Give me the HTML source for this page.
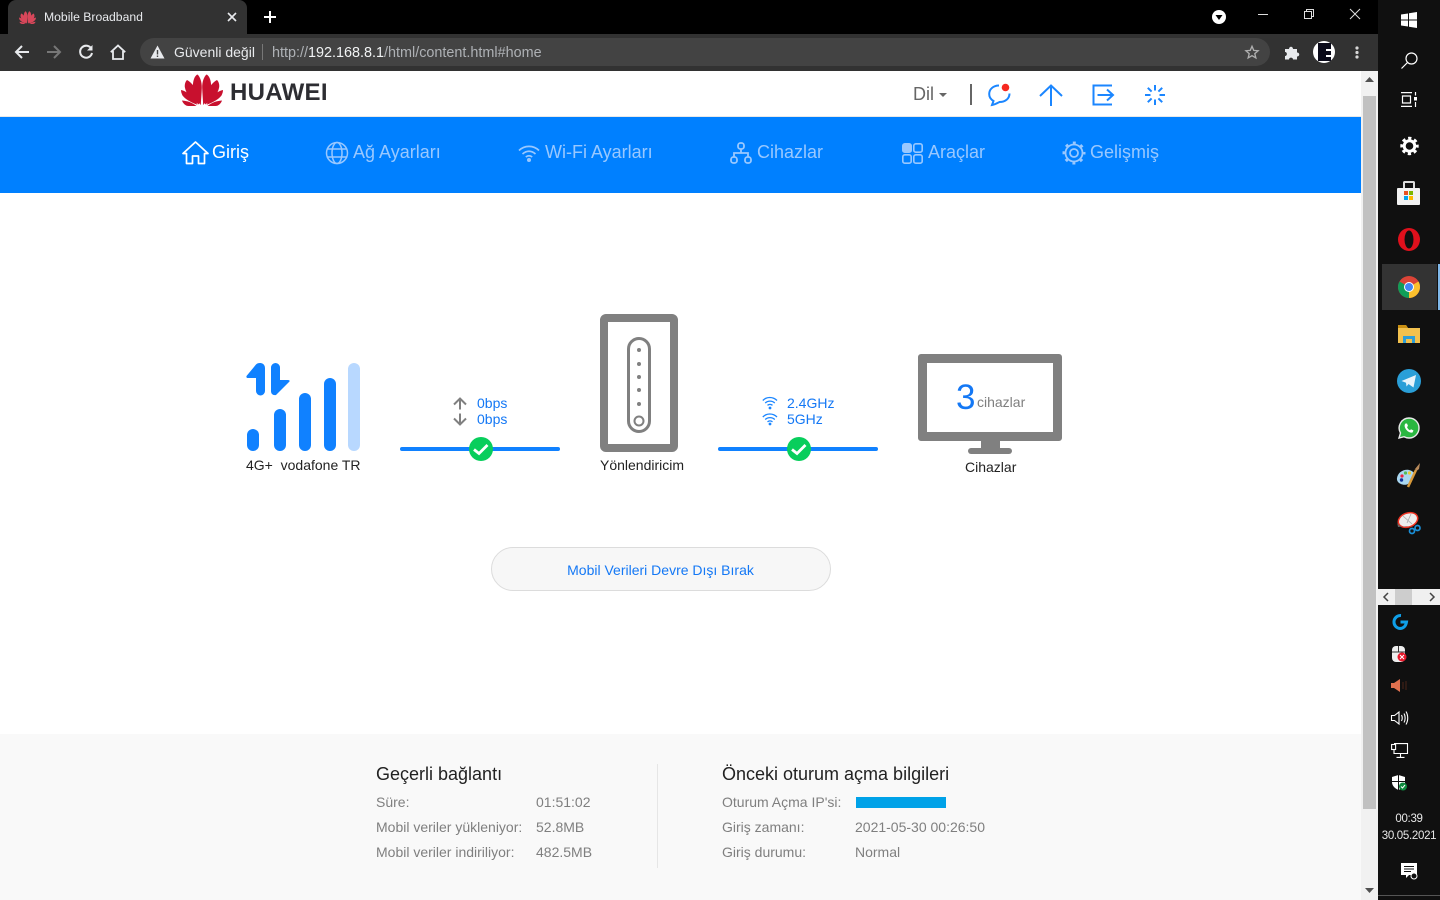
<!DOCTYPE html>
<html><head><meta charset="utf-8"><title>Mobile Broadband</title>
<style>
html,body{margin:0;padding:0;width:1440px;height:900px;overflow:hidden;background:#fff;font-family:"Liberation Sans",sans-serif}
.a{position:absolute;white-space:nowrap}
svg{position:absolute;overflow:visible}
.n{font-size:18px;line-height:22px;top:141px;color:#99c8ff}
.g{font-size:14px;line-height:18px;color:#7f7f7f}
.b{font-size:14px;line-height:16px;color:#1478f5}
.k{font-size:14px;line-height:18px;color:#222}
</style></head><body>
<!-- chrome -->
<div class="a" style="left:0;top:0;width:1378px;height:34px;background:#000"></div>
<div class="a" style="left:8px;top:0;width:239px;height:34px;background:#323232;border-radius:8px 8px 0 0"></div>
<div class="a" style="left:0;top:34px;width:1378px;height:37px;background:#323232"></div>
<svg style="left:19px;top:11px" width="17" height="13" viewBox="0 0 42 32"><g fill="#d8475a">
<path d="M19.800 31C12 23 10.500 12 13 5C14 2 16 .5 16.500 .5C19 2.500 21 8 20.800 14C20.600 20 20 26 19.800 31Z"/>
<path d="M22.200 31C30 23 31.500 12 29 5C28 2 26 .5 25.500 .5C23 2.500 21 8 21.200 14C21.400 20 22 26 22.200 31Z"/>
<path d="M18 30.500C10 26 5 20 3.800 13C3.500 10 4.500 7.500 6 6C10 8 14 13 16 18C17.500 22.500 18 27 18 30.500Z"/>
<path d="M24 30.500C32 26 37 20 38.200 13C38.500 10 37.500 7.500 36 6C32 8 28 13 26 18C24.500 22.500 24 27 24 30.500Z"/>
<path d="M16.500 30.800C10 28.500 4 25 1.500 21.500C.5 19.500 0 17.500 0 16C5 17 11 21 16.500 30.800Z"/>
<path d="M25.500 30.800C32 28.500 38 25 40.500 21.500C41.500 19.500 42 17.500 42 16C37 17 31 21 25.500 30.800Z"/>
<path d="M15.500 32H7.500C4.500 32 2 29.500 1 26.500C7 27 11 28.500 15.500 32Z"/>
<path d="M26.500 32H34.500C37.500 32 40 29.500 41 26.500C35 27 31 28.500 26.500 32Z"/></g></svg>
<div class="a" style="left:44px;top:9px;font-size:12.2px;line-height:16px;color:#e8eaed">Mobile Broadband</div>
<svg style="left:228px;top:13px" width="8" height="8"><path d="M0 0L8 8M8 0L0 8" stroke="#e8eaed" stroke-width="1.600"/></svg>
<svg style="left:264px;top:11px" width="12" height="12"><path d="M6 0V12M0 6H12" stroke="#fff" stroke-width="2"/></svg>
<!-- toolbar icons -->
<svg style="left:14px;top:44px" width="16" height="16" fill="none"><path d="M15 8H2M8 2L2 8L8 14" stroke="#e8eaed" stroke-width="2"/></svg>
<svg style="left:46px;top:44px" width="16" height="16" fill="none"><path d="M1 8H14M8 2L14 8L8 14" stroke="#777" stroke-width="2"/></svg>
<svg style="left:78px;top:44px" width="16" height="16" fill="none"><path d="M13.500 5A6 6 0 1 0 14 9" stroke="#e8eaed" stroke-width="2"/><path d="M14.500 1V6.500H9" fill="#e8eaed"/></svg>
<svg style="left:110px;top:44px" width="16" height="16" fill="none"><path d="M.8 8.200L8 1.500L15.200 8.200M3 7V15H13V7" stroke="#e8eaed" stroke-width="1.800"/></svg>
<div class="a" style="left:140px;top:38px;width:1130px;height:28px;border-radius:14px;background:#434343"></div>
<svg style="left:150px;top:45px" width="15" height="14"><path d="M7.500 .5L14.500 13.500H.5Z" fill="#e8eaed"/><path d="M7.500 5V9.500M7.500 10.500V12" stroke="#434343" stroke-width="1.400"/></svg>
<div class="a" style="left:174px;top:44px;font-size:14px;line-height:16px;color:#e8eaed">Güvenli değil</div>
<div class="a" style="left:262px;top:44px;width:1px;height:16px;background:#777"></div>
<div class="a" style="left:272px;top:45px;font-size:14.4px;line-height:16px;color:#aeb1b5">http://<span style="color:#f1f3f4">192.168.8.1</span>/html/content.html#home</div>
<svg style="left:1245px;top:45px" width="14" height="14" viewBox="0 0 16 16" fill="none"><path d="M8 1.500L10 6.200L15 6.600L11.200 9.900L12.400 14.800L8 12.200L3.600 14.800L4.800 9.900L1 6.600L6 6.200Z" stroke="#b0b0b0" stroke-width="1.500"/></svg>
<svg style="left:1284px;top:45px" width="15" height="15"><path d="M1 4H5C5 1 9 1 9 4H13V7.500C16 7.500 16 11.500 13 11.500V14.500H9C9 12 5 12 5 14.500H1V11C3.500 11 3.500 7 1 7Z" fill="#e8eaed"/></svg>
<div class="a" style="left:1313px;top:41px;width:22px;height:22px;border-radius:50%;background:#fff"></div>
<div class="a" style="left:1318px;top:43px;width:13px;height:18px;background:#0b0b1a"></div>
<div class="a" style="left:1326px;top:49px;width:5px;height:2px;background:#fff;box-shadow:0 6px 0 #fff"></div>
<svg style="left:1355px;top:46px" width="4" height="14"><circle cx="2" cy="2" r="1.600" fill="#d8d8d8"/><circle cx="2" cy="6.500" r="1.600" fill="#d8d8d8"/><circle cx="2" cy="11" r="1.600" fill="#d8d8d8"/></svg>
<!-- window controls -->
<svg style="left:1212px;top:10px" width="14" height="14"><circle cx="7" cy="7" r="7" fill="#fff"/><path d="M3.500 5H10.500L7 10Z" fill="#000"/></svg>
<div class="a" style="left:1258px;top:14px;width:10px;height:1px;background:#ddd"></div>
<svg style="left:1304px;top:9px" width="10" height="10" fill="none" stroke="#ddd"><rect x=".5" y="2.500" width="7" height="7"/><path d="M2.500 2.500V.5H9.500V7.500H7.500"/></svg>
<svg style="left:1350px;top:9px" width="10" height="10"><path d="M0 0L10 10M10 0L0 10" stroke="#ddd" stroke-width="1"/></svg>

<!-- header -->
<svg style="left:181px;top:74px" width="42" height="32" viewBox="0 0 42 32"><g fill="#c8102e">
<path d="M19.800 31C12 23 10.500 12 13 5C14 2 16 .5 16.500 .5C19 2.500 21 8 20.800 14C20.600 20 20 26 19.800 31Z"/>
<path d="M22.200 31C30 23 31.500 12 29 5C28 2 26 .5 25.500 .5C23 2.500 21 8 21.200 14C21.400 20 22 26 22.200 31Z"/>
<path d="M18 30.500C10 26 5 20 3.800 13C3.500 10 4.500 7.500 6 6C10 8 14 13 16 18C17.500 22.500 18 27 18 30.500Z"/>
<path d="M24 30.500C32 26 37 20 38.200 13C38.500 10 37.500 7.500 36 6C32 8 28 13 26 18C24.500 22.500 24 27 24 30.500Z"/>
<path d="M16.500 30.800C10 28.500 4 25 1.500 21.500C.5 19.500 0 17.500 0 16C5 17 11 21 16.500 30.800Z"/>
<path d="M25.500 30.800C32 28.500 38 25 40.500 21.500C41.500 19.500 42 17.500 42 16C37 17 31 21 25.500 30.800Z"/>
<path d="M15.500 32H7.500C4.500 32 2 29.500 1 26.500C7 27 11 28.500 15.500 32Z"/>
<path d="M26.500 32H34.500C37.500 32 40 29.500 41 26.500C35 27 31 28.500 26.500 32Z"/></g></svg>
<div class="a" style="left:230px;top:79px;font-size:24px;line-height:28px;font-weight:700;color:#2d2d32;letter-spacing:.3px">HUAWEI</div>
<div class="a" style="left:913px;top:84px;font-size:18px;line-height:20px;color:#666">Dil</div>
<svg style="left:939px;top:93px" width="8" height="4"><path d="M0 0H8L4 4Z" fill="#666"/></svg>
<div class="a" style="left:970px;top:84px;width:2px;height:21px;background:#666"></div>
<svg style="left:988px;top:83px" width="24" height="24" fill="none" stroke="#1b86ff" stroke-width="2"><path d="M11 2.500C5 2.500 1.200 6.500 1.200 11C1.200 14 3 16.500 5.500 18L4 22C7 21.500 9.500 20 11.500 19C17.500 19 21.500 15.500 21.500 10.500"/><circle cx="17.500" cy="4.500" r="3.800" fill="#f6281f" stroke="none"/></svg>
<svg style="left:1039px;top:84px" width="24" height="22" fill="none" stroke="#1b86ff" stroke-width="2"><path d="M12 22V1.500M1 12L12 1.500L23 12"/></svg>
<svg style="left:1092px;top:84px" width="23" height="22" fill="none" stroke="#1b86ff" stroke-width="2"><path d="M20 1.500H1.500V20.500H20M5.500 11H21M15 5.500L21 11L15 16.500"/></svg>
<svg style="left:1144px;top:84px" width="22" height="22" stroke="#1b86ff" stroke-width="2"><path d="M11 1V6.500M11 15.500V21M1 11H6.500M15.500 11H21M3.800 3.800L7.600 7.600M18.200 3.800L14.400 7.600M3.800 18.200L7.600 14.400M18.200 18.200L14.400 14.400"/></svg>

<!-- nav -->
<div class="a" style="left:0;top:116px;width:1361px;height:1px;background:#e8e8e8"></div>
<div class="a" style="left:0;top:117px;width:1361px;height:76px;background:#0080ff"></div>
<svg style="left:182px;top:141px" width="27" height="24" fill="none" stroke="#fff" stroke-width="1.700" stroke-linejoin="round"><path d="M1 12.500L13.500 1L26 12.500H22.500V22.500H16.500V15H10.500V22.500H4.500V12.500Z"/></svg>
<div class="a n" style="left:212px;color:#fff">Giriş</div>
<svg style="left:325px;top:141px" width="24" height="24" fill="none" stroke="#99c8ff" stroke-width="1.500"><circle cx="12" cy="12" r="10.500"/><ellipse cx="12" cy="12" rx="5" ry="10.500"/><path d="M2.500 8H21.500M2.500 16H21.500"/></svg>
<div class="a n" style="left:353px">Ağ Ayarları</div>
<svg style="left:518px;top:144px" width="22" height="18" fill="none" stroke="#99c8ff" stroke-width="1.700"><path d="M1 6.500C6.500 1 15.500 1 21 6.500M4.500 10C8.500 6.300 13.500 6.300 17.500 10M7.800 13C10 11.200 12 11.200 14.200 13"/><circle cx="11" cy="16" r="2" fill="#99c8ff" stroke="none"/></svg>
<div class="a n" style="left:545px">Wi-Fi Ayarları</div>
<svg style="left:730px;top:142px" width="22" height="22" fill="none" stroke="#99c8ff" stroke-width="1.800"><rect x="8" y="1" width="6" height="6" rx="2.500"/><rect x="1" y="15" width="6" height="6" rx="2.500"/><rect x="15" y="15" width="6" height="6" rx="2.500"/><path d="M11 7V11M4 15V11H18V15"/></svg>
<div class="a n" style="left:757px">Cihazlar</div>
<svg style="left:902px;top:143px" width="21" height="21" fill="none" stroke="#99c8ff" stroke-width="1.600"><rect x=".8" y=".8" width="8.400" height="8.400" rx="2" fill="#99c8ff"/><rect x="11.800" y=".8" width="8.400" height="8.400" rx="2"/><rect x=".8" y="11.800" width="8.400" height="8.400" rx="2"/><rect x="11.800" y="11.800" width="8.400" height="8.400" rx="2"/></svg>
<div class="a n" style="left:928px">Araçlar</div>
<svg style="left:1062px;top:141px" width="24" height="24" fill="none" stroke="#99c8ff"><circle cx="12" cy="12" r="8.500" stroke-width="1.800"/><circle cx="12" cy="12" r="4" stroke-width="1.800"/><circle cx="12" cy="12" r="10.300" stroke-width="2.400" stroke-dasharray="3 5.090" stroke-dashoffset="1.500"/></svg>
<div class="a n" style="left:1090px">Gelişmiş</div>

<!-- signal -->
<svg style="left:246px;top:363px" width="44" height="33" fill="#1081ff"><path d="M14 0C12 0 11 .5 10 1.500L.5 13Q0 15 2 15H10V28A4.500 4.500 0 0 0 19 28V5A4.500 5 0 0 0 14 0Z"/><path d="M29.500 0A4.500 4.500 0 0 0 25 4.500V28C25 31 27 32.500 30 32L43.500 18.500Q44 17 42 17H34V4.500A4.500 4.500 0 0 0 29.500 0Z"/></svg>
<div class="a" style="left:247px;top:429px;width:12px;height:22px;border-radius:6px;background:#1081ff"></div>
<div class="a" style="left:274px;top:409px;width:12px;height:42px;border-radius:6px;background:#1081ff"></div>
<div class="a" style="left:299px;top:393px;width:12px;height:58px;border-radius:6px;background:#1081ff"></div>
<div class="a" style="left:324px;top:378px;width:12px;height:73px;border-radius:6px;background:#1081ff"></div>
<div class="a" style="left:348px;top:363px;width:12px;height:88px;border-radius:6px;background:#b8d8ff"></div>
<div class="a k" style="left:246px;top:456px">4G+&nbsp; vodafone TR</div>

<!-- link 1 -->
<svg style="left:453px;top:397px" width="14" height="29" fill="none" stroke="#808080" stroke-width="2"><path d="M7 12.500V1.500M1 7.500L7 1.500L13 7.500M7 16.500V27.500M1 21.500L7 27.500L13 21.500"/></svg>
<div class="a b" style="left:477px;top:395px">0bps</div>
<div class="a b" style="left:477px;top:411px">0bps</div>
<div class="a" style="left:400px;top:447px;width:160px;height:4px;border-radius:2px;background:#1081ff"></div>
<svg style="left:469px;top:437px" width="24" height="24"><circle cx="12" cy="12" r="12" fill="#08ce5c"/><path d="M5 12.500L10 16.500L18.500 8" fill="none" stroke="#fff" stroke-width="2.800"/></svg>

<!-- router -->
<div class="a" style="left:600px;top:314px;width:62px;height:122px;border:8px solid #808080;border-radius:6px;background:#fff"></div>
<div class="a" style="left:627px;top:337px;width:18px;height:90px;border:3px solid #808080;border-radius:12px"></div>
<svg style="left:630px;top:340px" width="18" height="92"><g fill="#808080"><circle cx="9" cy="10" r="2"/><circle cx="9" cy="24" r="2"/><circle cx="9" cy="37" r="2"/><circle cx="9" cy="50" r="2"/><circle cx="9" cy="64" r="2"/></g><circle cx="9" cy="81" r="4.500" fill="none" stroke="#808080" stroke-width="2"/></svg>
<div class="a k" style="left:600px;top:456px">Yönlendiricim</div>

<!-- link 2 -->
<svg style="left:762px;top:396px" width="16" height="30" fill="none" stroke="#1b86ff" stroke-width="1.300"><path d="M.8 4.500C4.500 .5 11 .5 15 4.500M3.200 7C6 4.500 10 4.500 12.800 7M5.500 9.300C7 8.200 9 8.200 10.500 9.300"/><circle cx="8" cy="12" r="1.400" fill="#1b86ff" stroke="none"/><path d="M.8 21C4.500 17 11 17 15 21M3.200 23.500C6 21 10 21 12.800 23.500M5.500 25.800C7 24.700 9 24.700 10.500 25.800"/><circle cx="8" cy="28" r="1.400" fill="#1b86ff" stroke="none"/></svg>
<div class="a b" style="left:787px;top:395px">2.4GHz</div>
<div class="a b" style="left:787px;top:411px">5GHz</div>
<div class="a" style="left:718px;top:447px;width:160px;height:4px;border-radius:2px;background:#1081ff"></div>
<svg style="left:787px;top:437px" width="24" height="24"><circle cx="12" cy="12" r="12" fill="#08ce5c"/><path d="M5 12.500L10 16.500L18.500 8" fill="none" stroke="#fff" stroke-width="2.800"/></svg>

<!-- monitor -->
<div class="a" style="left:918px;top:354px;width:126px;height:69px;border:9px solid #808080;border-radius:3px;background:#fff"></div>
<div class="a" style="left:981px;top:441px;width:19px;height:9px;background:#808080"></div>
<div class="a" style="left:968px;top:448px;width:44px;height:6px;border-radius:3px;background:#808080"></div>
<div class="a" style="left:956px;top:380px;font-size:35px;line-height:36px;color:#1478f5">3</div>
<div class="a g" style="left:977px;top:393px">cihazlar</div>
<div class="a k" style="left:965px;top:458px">Cihazlar</div>

<!-- button -->
<div class="a" style="left:491px;top:547px;width:338px;height:42px;border:1px solid #dcdcdc;border-radius:22px;background:#f7f7f7"></div>
<div class="a" style="left:490.500px;top:561px;width:340px;text-align:center;font-size:14px;line-height:18px;color:#1478f5">Mobil Verileri Devre Dışı Bırak</div>

<!-- footer -->
<div class="a" style="left:0;top:734px;width:1361px;height:166px;background:#f9f9f9"></div>
<div class="a" style="left:657px;top:764px;width:1px;height:104px;background:#e6e6e6"></div>
<div class="a" style="left:376px;top:763px;font-size:18px;line-height:22px;color:#222">Geçerli bağlantı</div>
<div class="a g" style="left:376px;top:793px">Süre:</div><div class="a g" style="left:536px;top:793px">01:51:02</div>
<div class="a g" style="left:376px;top:818px">Mobil veriler yükleniyor:</div><div class="a g" style="left:536px;top:818px">52.8MB</div>
<div class="a g" style="left:376px;top:843px">Mobil veriler indiriliyor:</div><div class="a g" style="left:536px;top:843px">482.5MB</div>
<div class="a" style="left:722px;top:763px;font-size:18px;line-height:22px;color:#222">Önceki oturum açma bilgileri</div>
<div class="a g" style="left:722px;top:793px">Oturum Açma IP'si:</div><div class="a" style="left:856px;top:797px;width:90px;height:11px;background:#00a2e8"></div>
<div class="a g" style="left:722px;top:818px">Giriş zamanı:</div><div class="a g" style="left:855px;top:818px">2021-05-30 00:26:50</div>
<div class="a g" style="left:722px;top:843px">Giriş durumu:</div><div class="a g" style="left:855px;top:843px">Normal</div>

<!-- page scrollbar -->
<div class="a" style="left:1361px;top:71px;width:17px;height:829px;background:#f1f1f1"></div>
<div class="a" style="left:1363px;top:96px;width:13px;height:713px;background:#c1c1c1"></div>
<svg style="left:1365px;top:77px" width="9" height="6"><path d="M0 5L4.500 0L9 5Z" fill="#505050"/></svg>
<svg style="left:1365px;top:888px" width="9" height="6"><path d="M0 0H9L4.500 5Z" fill="#505050"/></svg>

<!-- taskbar -->
<div class="a" style="left:1378px;top:0;width:62px;height:900px;background:#101010"></div>
<svg style="left:1401px;top:12px" width="16" height="16" fill="#fff"><path d="M0 2.500L7 1.500V7.500H0ZM8 1.300L16 0V7.500H8ZM0 8.500H7V14.500L0 13.500ZM8 8.500H16V16L8 14.700Z"/></svg>
<svg style="left:1401px;top:52px" width="17" height="17" fill="none" stroke="#fff" stroke-width="1.200"><circle cx="10.500" cy="6.500" r="5.500"/><path d="M6.500 10.500L.5 16.500"/></svg>
<svg style="left:1400px;top:92px" width="18" height="15" fill="none" stroke="#fff" stroke-width="1.200"><path d="M1 .6H12M1 14.400H12M2.500 4H10.500V11H2.500ZM15.500 0V3.500M15.500 10V15"/><rect x="14" y="5" width="3" height="3.500" fill="#fff" stroke="none"/></svg>
<svg style="left:1400px;top:137px" width="19" height="18" viewBox="0 0 19 18" fill="none" stroke="#fff"><circle cx="9.500" cy="9" r="5.300" stroke-width="3"/><circle cx="9.500" cy="9" r="7.700" stroke-width="3" stroke-dasharray="3.200 2.850" stroke-dashoffset="1.600"/></svg>
<div class="a" style="left:1397px;top:188px;width:23px;height:17px;background:#f2f2f2;border-radius:1px"></div>
<div class="a" style="left:1403px;top:181px;width:12px;height:7px;border:2px solid #ddd;border-bottom:0;border-radius:2px 2px 0 0;box-sizing:border-box"></div>
<div class="a" style="left:1404px;top:191px;width:4px;height:4px;background:#e8501f"></div><div class="a" style="left:1409px;top:191px;width:4px;height:4px;background:#7db700"></div><div class="a" style="left:1404px;top:196px;width:4px;height:4px;background:#00a2ed"></div><div class="a" style="left:1409px;top:196px;width:4px;height:4px;background:#fdb900"></div>
<svg style="left:1398px;top:228px" width="22" height="23"><ellipse cx="11" cy="11.500" rx="11" ry="11.500" fill="#e0101c"/><ellipse cx="11" cy="11.500" rx="4.500" ry="9" fill="#101010"/></svg>
<div class="a" style="left:1382px;top:264px;width:55px;height:46px;background:#333"></div>
<div class="a" style="left:1437.500px;top:264px;width:2.500px;height:46px;background:#7fb8ea"></div>
<svg style="left:1398px;top:276px" width="22" height="22" viewBox="0 0 22 22"><circle cx="11" cy="11" r="11" fill="#db4437"/><path d="M11 11L1.500 5.500A11 11 0 0 0 11 22Z" fill="#0f9d58"/><path d="M11 11V22A11 11 0 0 0 20.500 5.500Z" fill="#fbc02d"/><circle cx="11" cy="11" r="5" fill="#fff"/><circle cx="11" cy="11" r="4" fill="#4285f4"/></svg>
<svg style="left:1398px;top:325px" width="22" height="18"><path d="M0 0H8L10 3H22V18H0Z" fill="#f2c14e"/><path d="M0 0H8L10 3H0Z" fill="#c98f12"/><path d="M5 18V11H17V18H14V14H8V18Z" fill="#2c9ed8"/></svg>
<svg style="left:1397px;top:369px" width="24" height="24"><circle cx="12" cy="12" r="12" fill="#2a9fd8"/><path d="M4.500 12L19 6L16.500 18.500L11.500 15L9.500 17.500L9 13.800Z" fill="#e8f4fb"/></svg>
<svg style="left:1398px;top:417px" width="22" height="22"><path d="M11 1A10 10 0 0 1 11 21C9 21 7.500 20.500 6 19.700L1 21L2.500 16A10 10 0 0 1 11 1Z" fill="#2bb741" stroke="#e8e8e8" stroke-width="1.400"/><path d="M7.500 6.500C6 8 6.500 10.500 8.500 13C10.500 15.300 13 16 14.500 15.500L15.500 13.500L13 12.200L12 13.200C11 13 9.500 11.500 9 10L10 9L9 6.500Z" fill="#fff"/></svg>
<svg style="left:1397px;top:463px" width="24" height="25"><path d="M0 15C1 9 7 6 12 7C16.500 8 18.500 11 17 13.500C14.500 14.500 13.500 15 13.500 17C13.500 21 9 22.500 5.500 21.500C2 20.500 -.5 18.500 0 15Z" fill="#a9d7f0"/><circle cx="5" cy="13" r="1.600" fill="#e24"/><circle cx="8.500" cy="10" r="1.600" fill="#5b5"/><circle cx="12.500" cy="10" r="1.600" fill="#ec3"/><circle cx="4.500" cy="17" r="1.700" fill="#139"/><path d="M11 24L19 7" stroke="#d89a3a" stroke-width="2.500"/><path d="M18 6L23 0L22 6L19.500 8Z" fill="#b88a5a"/></svg>
<svg style="left:1397px;top:511px" width="24" height="24"><ellipse cx="11" cy="9" rx="10" ry="7" fill="#eee" stroke="#e32" stroke-width="1.500" transform="rotate(-20 11 9)"/><path d="M0 11C2 17 8 16 12 15L1 16Z" fill="#666"/><path d="M6 5L15 13M14 3L10 12" stroke="#aaa" stroke-width=".8"/><circle cx="15" cy="20" r="2.500" fill="none" stroke="#1a8fd8" stroke-width="1.700"/><circle cx="20.500" cy="17" r="2.500" fill="none" stroke="#1a8fd8" stroke-width="1.700"/></svg>
<!-- tray scroller -->
<div class="a" style="left:1378px;top:589px;width:62px;height:16px;background:#f0f0f0"></div>
<div class="a" style="left:1395px;top:589px;width:17px;height:16px;background:#cdcdcd"></div>
<svg style="left:1383px;top:593px" width="6" height="8" fill="none" stroke="#444" stroke-width="1.500"><path d="M5 0L1 4L5 8"/></svg>
<svg style="left:1429px;top:593px" width="6" height="8" fill="none" stroke="#444" stroke-width="1.500"><path d="M1 0L5 4L1 8"/></svg>
<svg style="left:1391px;top:614px" width="17" height="16" fill="none" stroke="#0f9fe8" stroke-width="3"><path d="M10 1.500A6.300 6.300 0 1 0 9 14.500C12 14.500 14.800 12.500 15.500 8H9.500"/></svg>
<svg style="left:1392px;top:646px" width="16" height="16"><rect x="0" y="0" width="13" height="16" rx="4" fill="#eee"/><path d="M0 6H13M6.500 0V6" stroke="#333"/><circle cx="10" cy="11" r="4.500" fill="#e8192c"/><path d="M8 9L12 13M12 9L8 13" stroke="#fff"/></svg>
<svg style="left:1391px;top:678px" width="16" height="15"><path d="M0 5H3L9 1V14L3 10H0Z" fill="#e0714f"/><path d="M12 4V11M15 3V12" stroke="#4a2318"/></svg>
<svg style="left:1391px;top:710px" width="17" height="16" fill="none" stroke="#fff" stroke-width="1.100"><path d="M.5 5.500H3.500L8 2V14L3.500 10.500H.5Z"/><path d="M10.500 5C11.500 7 11.500 9 10.500 11M13 3.500C14.500 6 14.500 10 13 12.500M15 1.500C17.300 5.500 17.300 10.500 15 14.500"/></svg>
<svg style="left:1391px;top:743px" width="17" height="15" fill="none" stroke="#fff" stroke-width="1.100"><path d="M3 .6H16.500V10.500H3V7M9.500 10.500V14M5.500 14.400H13.500"/><rect x=".6" y="1.500" width="4" height="5" fill="#101010"/></svg>
<svg style="left:1392px;top:775px" width="16" height="16"><path d="M6.500 0L13 2V7C13 10 11 13 6.500 15C2 13 0 10 0 7V2Z" fill="#fff"/><path d="M6.500 0V15M0 6.500H13" stroke="#101010"/><circle cx="11" cy="11.500" r="4" fill="#0d8a3e"/><path d="M9 11.500L10.500 13L13 10" stroke="#fff" fill="none"/></svg>
<div class="a" style="left:1378px;top:811px;width:62px;text-align:center;font-size:11.500px;line-height:16px;color:#e8e8e8;letter-spacing:-.3px">00:39</div>
<div class="a" style="left:1378px;top:828px;width:62px;text-align:center;font-size:11.500px;line-height:16px;color:#e8e8e8;letter-spacing:-.3px">30.05.2021</div>
<svg style="left:1401px;top:863px" width="17" height="17"><path d="M0 0H16V12H8L5 15V12H0Z" fill="#fff"/><path d="M3 3.500H13M3 6H13M3 8.500H10" stroke="#101010"/><circle cx="13" cy="13" r="3" fill="#101010" stroke="#fff"/></svg>
<div class="a" style="left:1378px;top:895px;width:62px;height:1px;background:#555"></div>
</body></html>
